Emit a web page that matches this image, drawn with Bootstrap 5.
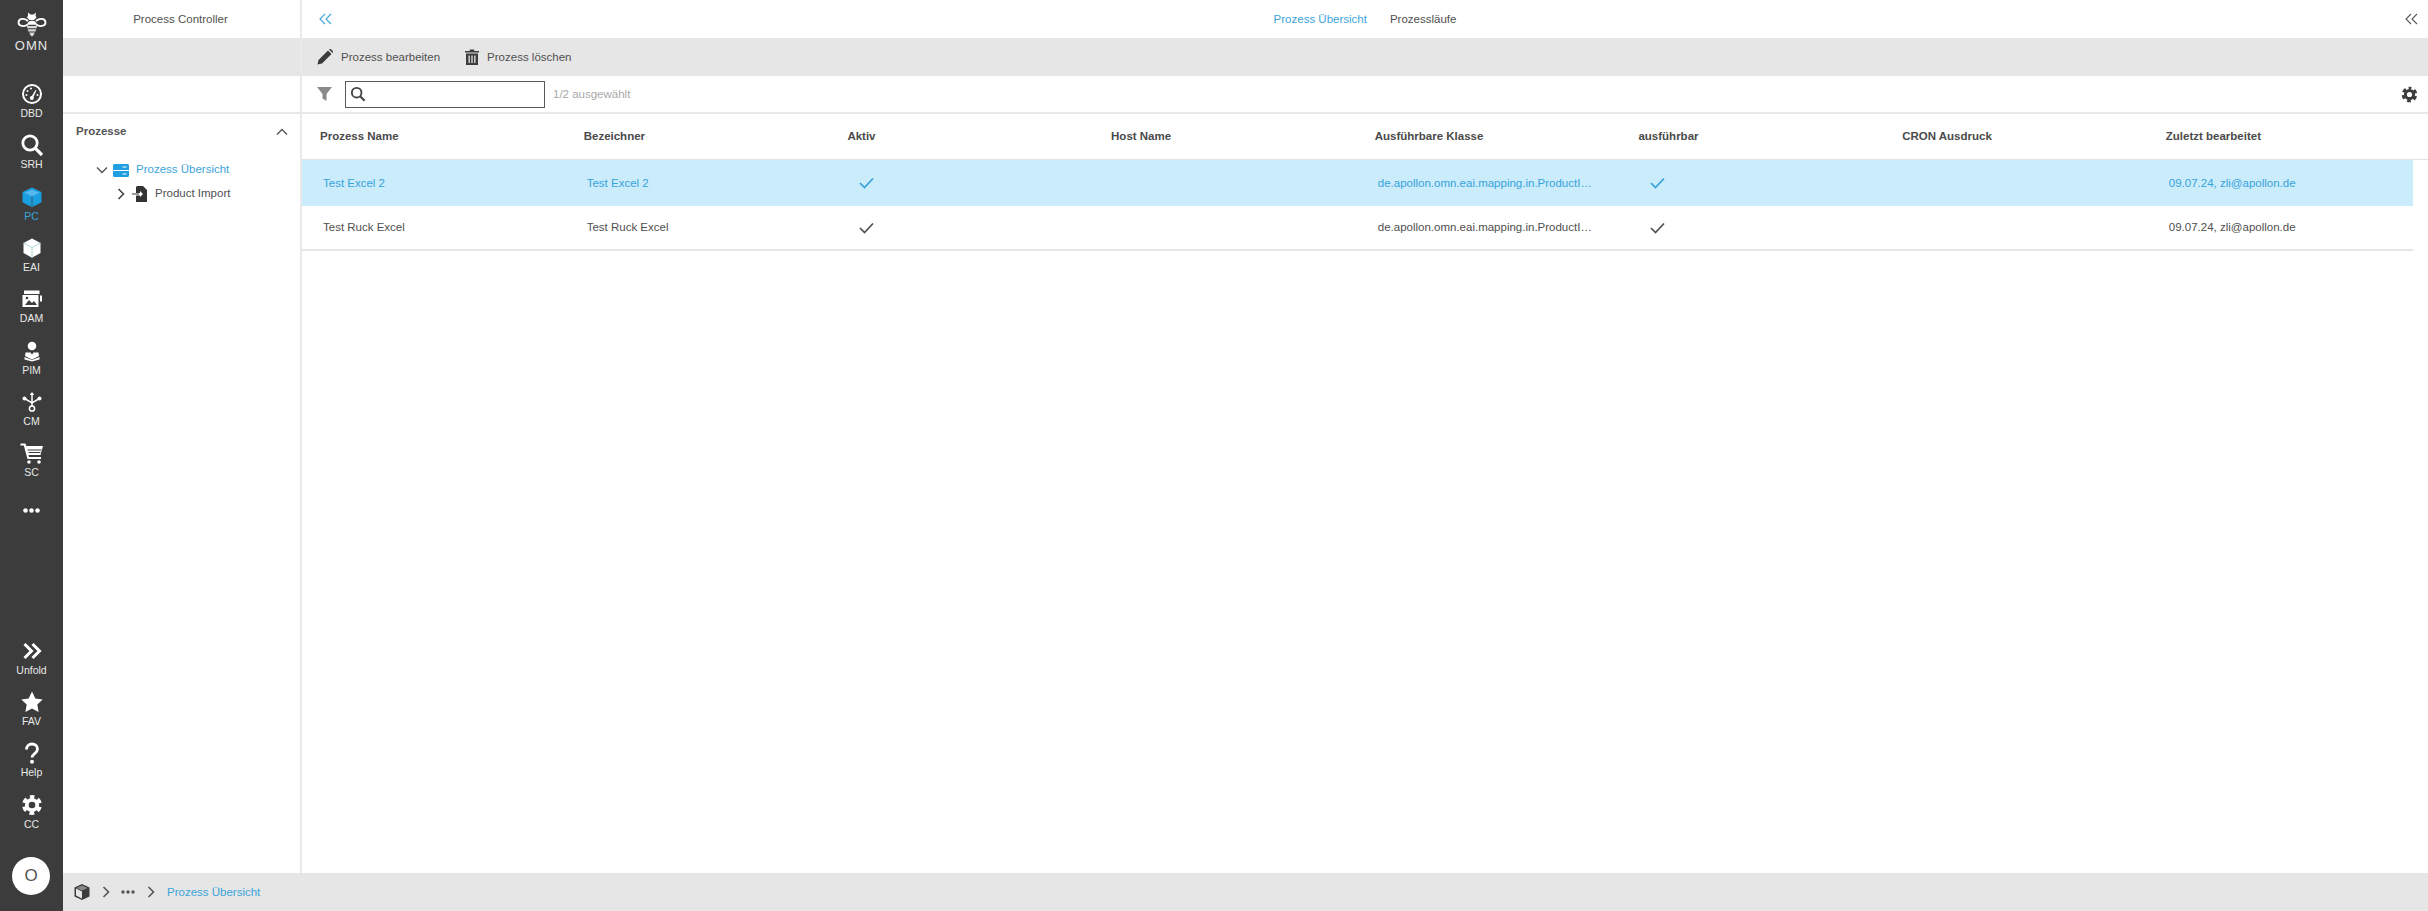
<!DOCTYPE html>
<html lang="de">
<head>
<meta charset="utf-8">
<title>OMN Process Controller</title>
<link rel="stylesheet" href="https://cdn.jsdelivr.net/npm/bootstrap@5.3.0/dist/css/bootstrap.min.css">
<style>
html,body{height:100%;overflow:hidden}
body{font-family:"Liberation Sans",Arial,sans-serif;font-size:11.5px;color:#505050;background:#fff}
.omn-shell{height:911px}
.omn-rail{width:63px;flex:none;background:#3c3c3c;color:#eee}
.omn-logo{height:80px;padding-top:12px}
.omn-logo span{font-size:13px;line-height:14px;letter-spacing:1px;margin-top:1px;color:#e6e6e6;font-weight:400}
.omn-item{height:51.33px;padding-top:2px;font-size:10.5px;line-height:12px;color:#e8e8e8}
.omn-item svg{width:24px;height:24px;display:block;margin-bottom:1px}
.omn-item.omn-on{color:#36a3dc}
.omn-dots{height:20px;margin-top:10px}
.omn-avatar{width:38px;height:38px;border-radius:50%;background:#fff;color:#555;font-size:17px;margin:15px 0 16px 12px}
.omn-tree-panel{width:239px;flex:none;border-right:2px solid #e9e9e9}
.omn-top{height:38px;flex:none}
.omn-title{padding-right:2px}
.omn-grey{height:38px;flex:none;background:#e6e6e6}
.omn-filter{height:38px;flex:none;border-bottom:2px solid #e8e8e8}
.omn-blue{color:#3ba4da}
.omn-tx{padding-top:1px}
.omn-acc{height:36px;padding:0 12px 0 13px;font-weight:700;color:#555}
.omn-tree{padding-top:8px}
.omn-node{height:24px}
.omn-node1{padding-left:33px}
.omn-node2{padding-left:52px}
.omn-tw{width:12px;flex:none;margin-right:5px}
.omn-ic{flex:none}
.omn-gap{margin-left:7px}
.omn-tab{margin-left:23px}
.omn-mid{padding-right:6px}
.omn-endchev{margin-right:10px}
.omn-bar{padding-left:15px}
.omn-act{font-size:11.5px;color:#505050}
.omn-act-first{margin-right:25px}
.omn-search{width:200px;height:27px;border:1px solid #5a5a5a;padding-left:4px;margin:0 8px 0 13px;color:#444}
.omn-muted{color:#a9a9a9}
.omn-cog{margin-right:9px;color:#3c3c3c}
.omn-hrow{height:46px;border-bottom:1px solid #e2e2e2;font-weight:700;color:#4a4a4a;padding-left:1px;padding-top:1px}
.omn-row{height:45.5px;width:2111px;border-bottom:2px solid transparent;padding-left:1px}
.omn-row.omn-sel{background:#cbecfa;color:#36a3dc;border-bottom:0}
.omn-row.omn-last{border-bottom-color:#e6e6e6}
.omn-hc{width:263.7px;flex:none;padding-left:17px}
.omn-c{width:263.7px;flex:none;padding-left:20px}
.omn-chk{padding-left:29px}
.omn-clip{display:block;width:212px;white-space:nowrap}
.omn-foot{height:38px;flex:none;background:#e6e6e6;padding-left:11px;color:#555}
.omn-f1{margin-left:10px}
.omn-f2{margin-left:9px}
</style>
</head>
<body>
<svg width="0" height="0" class="d-none" aria-hidden="true">
<symbol id="gear" viewBox="0 0 24 24"><g fill="none" stroke="currentColor"><circle cx="12" cy="12" r="5.200" stroke-width="3.800"/><circle cx="12" cy="12" r="8.200" stroke-width="3.400" stroke-dasharray="4.800 3.787" stroke-dashoffset="2.400" transform="rotate(-90 12 12)"/></g></symbol>
<symbol id="chev" viewBox="0 0 12 12"><path d="M3.500 1 8.500 6 3.500 11" fill="none" stroke="currentColor" stroke-width="1.600"/></symbol>
<symbol id="dbl" viewBox="0 0 14 12"><path d="M7 1 2 6l5 5M13 1 8 6l5 5" fill="none" stroke="currentColor" stroke-width="1.100"/></symbol>
<symbol id="lens" viewBox="0 0 24 24"><circle cx="10" cy="10" r="7.200" fill="none" stroke="currentColor" stroke-width="2.800"/><path d="m15.200 15.200 6.800 6.800" stroke="currentColor" stroke-width="3.200"/></symbol>
<symbol id="tick" viewBox="0 0 15 12"><path d="m1 6 4.500 4.500L14 1.500" fill="none" stroke="currentColor" stroke-width="1.700"/></symbol>
</svg>
<div class="d-flex omn-shell">
  <nav class="omn-rail d-flex flex-column">
    <div class="omn-logo d-flex flex-column align-items-center">
      <svg width="30" height="26" viewBox="0 0 30 26" fill="none"><path d="M11 .5l2.500 2h3l2.500-2-.5 3 1 2-2.500 2.500h-4.500L10 5.500l1-2z" fill="#fff"/><path d="M11 9C7 5.500 1.500 6.500 1.500 10.500 1.500 14.500 7.500 15 11 12.500M19 9c4-3.500 9.500-2.500 9.500 1.500 0 4-6 4.500-9.500 2" stroke="#fff" stroke-width="1.800"/><path d="M10.200 12.800c0-2.800 2-4 4.800-4s4.800 1.200 4.800 4z" fill="#fff"/><path d="M10.200 14h9.600v2.200h-9.600zM10.800 17.300h8.400l-.6 2.200h-7.200zM12.300 20.500h5.400C17 22.800 16 24 15 24.500c-1-.5-2-1.700-2.700-4z" fill="#d8d8d8"/></svg>
      <span>OMN</span>
    </div>
    <div class="omn-item d-flex flex-column align-items-center">
      <svg viewBox="0 0 24 24"><circle cx="12" cy="12" r="9" fill="#3c3c3c" stroke="#fff" stroke-width="2"/><path d="m10.800 15.500 4.700-7.500 1 .6-3.700 8z" fill="#fff"/><circle cx="11.800" cy="16" r="2" fill="#fff"/><g fill="#fff"><circle cx="6.500" cy="13" r="1"/><circle cx="7.500" cy="9" r="1"/><circle cx="11" cy="6.500" r="1"/><circle cx="17.500" cy="13" r="1"/></g></svg>
      DBD
    </div>
    <div class="omn-item d-flex flex-column align-items-center">
      <svg viewBox="0 0 24 24" color="#fff"><use href="#lens"/></svg>
      SRH
    </div>
    <div class="omn-item omn-on d-flex flex-column align-items-center">
      <svg viewBox="0 0 24 24"><path d="M12 2.500 20.500 6.500c.7 .4 1 .9 1 1.700v8c0 .8-.4 1.400-1 1.700L12 22l-8.500-4.100c-.6-.3-1-.9-1-1.700v-8c0-.8 .3-1.300 1-1.700z" fill="#1b9ee0"/><path d="M4.500 7.800 12 11.200l7.500-3.400-7.500-3z" fill="#55b8ea"/><path d="M12 11.500V21" stroke="#3c3c3c" stroke-width=".7"/></svg>
      PC
    </div>
    <div class="omn-item d-flex flex-column align-items-center">
      <svg viewBox="0 0 24 24"><path d="M12 2.500 20.500 7v10L12 21.800 3.500 17V7z" fill="#fff"/><path d="M3.500 7 12 11.500 20.500 7M12 11.500v10.300" fill="none" stroke="#9cc" stroke-width=".8"/></svg>
      EAI
    </div>
    <div class="omn-item d-flex flex-column align-items-center">
      <svg viewBox="0 0 24 24"><path d="M4 3.500h15.500V7H4z" fill="#fff"/><path d="M2.500 8h16v12h-16z" fill="#fff"/><path d="m5 18 4-5 3 3 2-2 3 4z" fill="#3c3c3c"/><circle cx="7" cy="11" r="1.300" fill="#3c3c3c"/><path d="M20 8.500h2v6h-2z" fill="#fff"/></svg>
      DAM
    </div>
    <div class="omn-item d-flex flex-column align-items-center">
      <svg viewBox="0 0 24 24"><circle cx="12" cy="7" r="4.300" fill="#fff"/><path d="M5.500 13.500h5L12 15.500l1.500-2h5l.5 3.500-7 3.500L5 17z" fill="#fff"/><path d="M4.500 18 12 21l7.500-3v2.500L12 22.500l-7.500-2z" fill="#fff"/></svg>
      PIM
    </div>
    <div class="omn-item d-flex flex-column align-items-center">
      <svg viewBox="0 0 24 24" fill="#fff"><path d="M12 4v15M4.500 8.500 12 13l7.500-4.500" fill="none" stroke="#fff" stroke-width="1.500"/><path d="m12 2 2.300 3h-4.600z"/><circle cx="4.500" cy="8.500" r="2"/><circle cx="19.500" cy="8.500" r="2"/><circle cx="12" cy="18.500" r="2.600" fill="#3c3c3c" stroke="#fff" stroke-width="1.500"/></svg>
      CM
    </div>
    <div class="omn-item d-flex flex-column align-items-center">
      <svg viewBox="0 0 24 24" fill="#fff"><path d="M.500 2.500h5l.8 2.500H23l-2.500 9H8.500l.5 2h12v2H7.500L3.800 4.500H.500z"/><path d="M7.500 8.500h14v1h-14zM8.500 11h12v1h-12z" fill="#3c3c3c"/><circle cx="9" cy="21" r="1.800"/><circle cx="19" cy="21" r="1.800"/></svg>
      SC
    </div>
    <div class="omn-dots d-flex align-items-center justify-content-center" aria-label="mehr">
      <svg width="17" height="5" viewBox="0 0 17 5" fill="#fff"><circle cx="2.500" cy="2.500" r="2.300"/><circle cx="8.500" cy="2.500" r="2.300"/><circle cx="14.500" cy="2.500" r="2.300"/></svg>
    </div>
    <div class="mt-auto">
      <div class="omn-item d-flex flex-column align-items-center">
        <svg viewBox="0 0 24 24"><path d="m4.500 5 7 7-7 7M12.500 5l7 7-7 7" fill="none" stroke="#fff" stroke-width="3"/></svg>
        Unfold
      </div>
      <div class="omn-item d-flex flex-column align-items-center">
        <svg viewBox="0 0 24 24"><path d="m12 1.500 3.300 6.900 7.400 1-5.400 5.200 1.300 7.500L12 18.500l-6.600 3.600 1.300-7.500L1.300 9.400l7.400-1z" fill="#fff"/></svg>
        FAV
      </div>
      <div class="omn-item d-flex flex-column align-items-center">
        <svg viewBox="0 0 24 24"><path d="M6.500 8.500C6.500 5 9 3 12 3s5.500 2 5.500 5c0 4.500-5.500 4.500-5.500 8.500" fill="none" stroke="#fff" stroke-width="2.800"/><circle cx="12" cy="20.800" r="2" fill="#fff"/></svg>
        Help
      </div>
      <div class="omn-item d-flex flex-column align-items-center">
        <svg viewBox="0 0 24 24" color="#fff"><use href="#gear"/></svg>
        CC
      </div>
    </div>
    <div class="omn-avatar d-flex align-items-center justify-content-center">O</div>
  </nav>

  <div class="flex-grow-1 d-flex flex-column" style="min-width:0">
    <div class="d-flex flex-grow-1" style="min-height:0">
      <aside class="omn-tree-panel d-flex flex-column">
        <div class="omn-top omn-title d-flex align-items-center justify-content-center"><span class="omn-tx">Process Controller</span></div>
        <div class="omn-grey"></div>
        <div class="omn-filter"></div>
        <div class="omn-acc d-flex align-items-center justify-content-between">
          <span>Prozesse</span>
          <svg width="12" height="12" viewBox="0 0 12 12"><path d="m1 8.500 5-5 5 5" fill="none" stroke="#555" stroke-width="1.400"/></svg>
        </div>
        <div class="omn-tree">
          <div class="omn-node omn-node1 d-flex align-items-center">
            <svg class="omn-tw" width="12" height="12" viewBox="0 0 12 12"><path d="m1 3.500 5 5 5-5" fill="none" stroke="#555" stroke-width="1.400"/></svg>
            <svg class="omn-ic" width="16" height="13" viewBox="0 0 16 13" fill="#1f9fe0"><path d="M1.500 0h13A1.500 1.500 0 0 1 16 1.500V6H0V1.500A1.500 1.500 0 0 1 1.500 0zM0 7h16v4.500a1.500 1.500 0 0 1-1.500 1.500h-13A1.500 1.500 0 0 1 0 11.500z"/><path d="M9.500 2.500h4v1h-4zM9.500 9.500h4v1h-4z" fill="#fff"/></svg>
            <span class="omn-blue omn-gap">Prozess Übersicht</span>
          </div>
          <div class="omn-node omn-node2 d-flex align-items-center">
            <svg class="omn-tw" width="12" height="12" viewBox="0 0 12 12" color="#444"><use href="#chev"/></svg>
            <svg class="omn-ic" width="16" height="16" viewBox="0 0 16 16" fill="#333"><path d="M5 0h6l4 4v12H4V9.500h4V11l3-3-3-3v2H4V1z"/><path d="M0 7.500h7v1H0z"/></svg>
            <span class="omn-gap">Product Import</span>
          </div>
        </div>
      </aside>

      <main class="flex-grow-1 d-flex flex-column" style="min-width:0">
        <div class="omn-top d-flex align-items-center">
          <svg class="omn-blue ms-3" width="14" height="12" viewBox="0 0 14 12"><use href="#dbl"/></svg>
          <div class="omn-mid omn-tx d-flex justify-content-center flex-grow-1">
            <span class="omn-blue">Prozess Übersicht</span>
            <span class="omn-tab">Prozessläufe</span>
          </div>
          <svg class="omn-endchev" width="14" height="12" viewBox="0 0 14 12" color="#555"><use href="#dbl"/></svg>
        </div>
        <div class="omn-grey omn-bar d-flex align-items-center">
          <button type="button" class="btn btn-link p-0 border-0 rounded-0 text-decoration-none d-flex align-items-center omn-act omn-act-first">
            <svg width="16" height="16" viewBox="0 0 16 16" fill="#3c3c3c" class="me-2"><path d="M11 1.500 14.500 5 5 14.500l-4.500 1 1-4.500zM12 .5l.8-.4c.5-.2 1-.1 1.400.3l1.400 1.400c.4.400.5.900.3 1.400l-.4.800z"/></svg>
            <span class="omn-tx">Prozess bearbeiten</span>
          </button>
          <button type="button" class="btn btn-link p-0 border-0 rounded-0 text-decoration-none d-flex align-items-center omn-act">
            <svg width="14" height="16" viewBox="0 0 14 16" fill="#3c3c3c" class="me-2"><path d="M0 2h4.500l.6-1.500h3.800L9.500 2H14v1.500H0zM1 4.500h12V16H1z"/><path d="M3.500 6.500h1.300V14H3.500zM6.350 6.500h1.300V14h-1.300zM9.200 6.500h1.300V14H9.200z" fill="#e6e6e6"/></svg>
            <span class="omn-tx">Prozess löschen</span>
          </button>
        </div>
        <div class="omn-filter omn-bar d-flex align-items-center">
          <svg width="15" height="14" viewBox="0 0 15 14" fill="#8a8a8a"><path d="M0 0h15L9.500 7v7l-4-2.500V7z"/></svg>
          <div class="omn-search d-flex align-items-center">
            <svg width="16" height="16" viewBox="0 0 24 24"><use href="#lens"/></svg>
          </div>
          <span class="omn-muted omn-tx">1/2 ausgewählt</span>
          <svg class="omn-cog ms-auto" width="19" height="19" viewBox="0 0 24 24"><use href="#gear"/></svg>
        </div>
        <div class="omn-hrow d-flex align-items-center">
          <div class="omn-hc">Prozess Name</div><div class="omn-hc">Bezeichner</div><div class="omn-hc">Aktiv</div><div class="omn-hc">Host Name</div><div class="omn-hc">Ausführbare Klasse</div><div class="omn-hc">ausführbar</div><div class="omn-hc">CRON Ausdruck</div><div class="omn-hc">Zuletzt bearbeitet</div>
        </div>
        <div class="omn-row omn-sel d-flex align-items-center">
          <div class="omn-c omn-tx">Test Excel 2</div><div class="omn-c omn-tx">Test Excel 2</div>
          <div class="omn-c omn-chk"><svg width="15" height="12"><use href="#tick"/></svg></div>
          <div class="omn-c"></div>
          <div class="omn-c omn-tx"><span class="omn-clip">de.apollon.omn.eai.mapping.in.ProductI…</span></div>
          <div class="omn-c omn-chk"><svg width="15" height="12"><use href="#tick"/></svg></div>
          <div class="omn-c"></div>
          <div class="omn-c omn-tx">09.07.24, zli@apollon.de</div>
        </div>
        <div class="omn-row omn-last d-flex align-items-center">
          <div class="omn-c omn-tx">Test Ruck Excel</div><div class="omn-c omn-tx">Test Ruck Excel</div>
          <div class="omn-c omn-chk"><svg width="15" height="12"><use href="#tick"/></svg></div>
          <div class="omn-c"></div>
          <div class="omn-c omn-tx"><span class="omn-clip">de.apollon.omn.eai.mapping.in.ProductI…</span></div>
          <div class="omn-c omn-chk"><svg width="15" height="12"><use href="#tick"/></svg></div>
          <div class="omn-c"></div>
          <div class="omn-c omn-tx">09.07.24, zli@apollon.de</div>
        </div>
      </main>
    </div>
    <footer class="omn-foot d-flex align-items-center">
      <svg width="16" height="16" viewBox="0 0 16 16"><path d="M8 0 15.500 3.500v9L8 16 .5 12.500v-9z" fill="#3c3c3c"/><path d="M2 4.500 8 7.500v7L2 11.500z" fill="#e6e6e6"/><path d="M8 1.500 13.500 4 8 6.500 2.500 4z" fill="#8a8a8a"/></svg>
      <svg class="omn-f1" width="12" height="12" viewBox="0 0 12 12"><use href="#chev"/></svg>
      <svg class="omn-f2" width="14" height="4" viewBox="0 0 14 4" fill="#555"><circle cx="2" cy="2" r="1.700"/><circle cx="7" cy="2" r="1.700"/><circle cx="12" cy="2" r="1.700"/></svg>
      <svg class="omn-f1" width="12" height="12" viewBox="0 0 12 12"><use href="#chev"/></svg>
      <span class="omn-blue omn-f1 omn-tx">Prozess Übersicht</span>
    </footer>
  </div>
</div>
</body>
</html>
